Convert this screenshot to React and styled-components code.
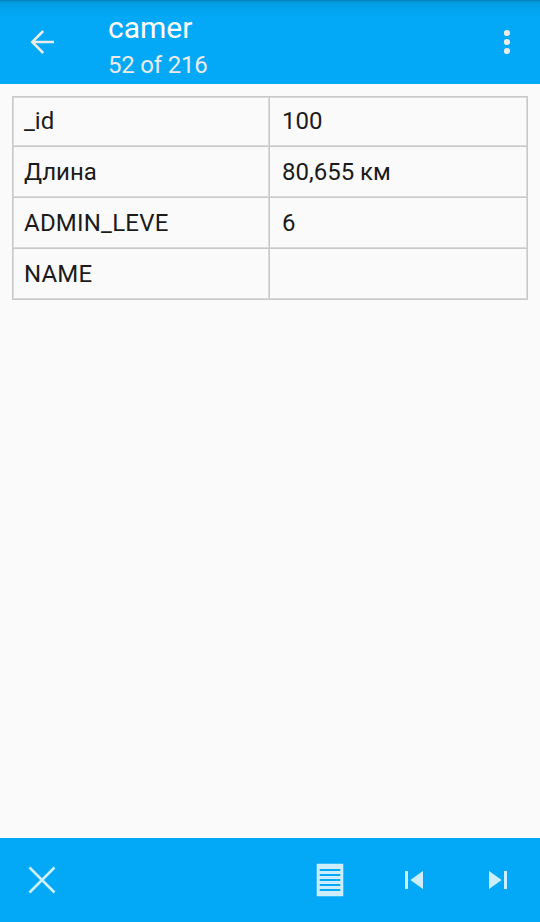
import React from "react";
import styled, { createGlobalStyle } from "styled-components";

const GlobalStyle = createGlobalStyle`
  *, *::before, *::after { box-sizing: border-box; }
  body { margin: 0; background: #fafafa; font-family: Roboto, "Noto Sans", sans-serif; }
`;

const Screen = styled.div`
  display: flex;
  flex-direction: column;
  height: 100vh;
  overflow: hidden;
`;

const AppBar = styled.header`
  display: flex;
  flex: none;
  height: 84px;
  background: linear-gradient(#037cb3 0, #038ac8 1px, #0399dd 2px, #039fe6 4px, #03a4ee 10px, #03a9f7 18px);
`;

const IconButton = styled.button`
  display: flex;
  flex: none;
  width: ${({ $width = 84 }) => $width}px;
  height: 84px;
  padding: 0;
  border: 0;
  background: none;
  opacity: ${({ $opacity = 1 }) => $opacity};
`;

const Titles = styled.div`
  flex: 1;
  padding: 10px 0 0 24px;
`;

const Title = styled.h1`
  margin: 0;
  font-size: 30px;
  line-height: 36px;
  font-weight: 400;
  color: #fff;
`;

const Subtitle = styled.div`
  margin-top: 4px;
  font-size: 24px;
  line-height: 30px;
  letter-spacing: -0.2px;
  color: #ebebeb;
`;

const Content = styled.main`
  flex: 1;
  padding: 12px;
`;

const Table = styled.dl`
  display: grid;
  grid-template-columns: 257px 257px;
  grid-template-rows: 50px 51px 51px 51px;
  width: 516px;
  margin: 0;
  border: solid #c9c9c9;
  border-width: 1px 1px 0 1px;
`;

const Cell = styled.dd`
  margin: 0;
  padding: 0 0 0 ${({ $value }) => ($value ? 12 : 11)}px;
  border-right: ${({ $value }) => ($value ? 0 : 1)}px solid #c9c9c9;
  border-bottom: 1px solid #c9c9c9;
  box-shadow:
    inset -1px -1px #dadada,
    inset ${({ $value }) => ($value ? 0 : 1)}px ${({ $first }) => ($first ? 1 : 0)}px #dadada;
  font-size: 24px;
  line-height: ${({ $first }) => ($first ? 48 : 50)}px;
  letter-spacing: ${({ $tracking = 0 }) => $tracking}px;
  color: #1b1b1b;
`;

const BottomBar = styled.nav`
  display: flex;
  flex: none;
  height: 84px;
  background: #03a9f7;
`;

const Spacer = styled.div`
  flex: 1;
`;

const rows = [
  { name: "_id", value: "100" },
  { name: "Длина", value: "80,655 км" },
  { name: "ADMIN_LEVE", value: "6", tracking: 0.22 },
  { name: "NAME", value: "", tracking: 0.15 },
];

const Icon = ({ children }) => (
  <svg width="84" height="84" viewBox="0 0 84 84" aria-hidden="true">{children}</svg>
);

export default function App() {
  return (
    <Screen>
      <GlobalStyle />
      <AppBar>
        <IconButton aria-label="Back">
          <Icon>
            <path d="M54 42H32M43.2 31L32.2 42L43.2 53" fill="none" stroke="#ebebeb" strokeWidth="2.5" />
          </Icon>
        </IconButton>
        <Titles>
          <Title>camer</Title>
          <Subtitle>52 of 216</Subtitle>
        </Titles>
        <IconButton $width={66} aria-label="More options">
          <svg width="66" height="84" aria-hidden="true">
            {[33, 42, 51].map((y) => (
              <circle key={y} cx="33" cy={y} r="3.1" fill="#ebebeb" />
            ))}
          </svg>
        </IconButton>
      </AppBar>
      <Content>
        <Table>
          {rows.map(({ name, value, tracking }, index) => (
            <React.Fragment key={name}>
              <Cell as="dt" $first={index === 0} $tracking={tracking}>{name}</Cell>
              <Cell $value $first={index === 0}>{value}</Cell>
            </React.Fragment>
          ))}
        </Table>
      </Content>
      <BottomBar>
        <IconButton $opacity={0.82} aria-label="Close">
          <Icon>
            <path d="M29.5 29.5L54.5 54.5M54.5 29.5L29.5 54.5" fill="none" stroke="#fff" strokeWidth="2.5" />
          </Icon>
        </IconButton>
        <Spacer />
        <IconButton $opacity={0.8} aria-label="Attributes">
          <Icon>
            <path
              fillRule="evenodd"
              fill="#fff"
              d="M28.7 25.8H55.3V58.2H28.7ZM31.7 31V33H52.3V31ZM31.7 36V38H52.3V36ZM31.7 41V43H52.3V41ZM31.7 46V48H52.3V46ZM31.7 51V53H52.3V51Z"
            />
          </Icon>
        </IconButton>
        <IconButton $opacity={0.8} aria-label="Previous">
          <Icon>
            <path d="M33 33H36V51H33ZM51 33V51L38.3 42Z" fill="#fff" />
          </Icon>
        </IconButton>
        <IconButton $opacity={0.8} aria-label="Next">
          <Icon>
            <path d="M33 33L45.7 42L33 51ZM48 33H51V51H48Z" fill="#fff" />
          </Icon>
        </IconButton>
      </BottomBar>
    </Screen>
  );
}
